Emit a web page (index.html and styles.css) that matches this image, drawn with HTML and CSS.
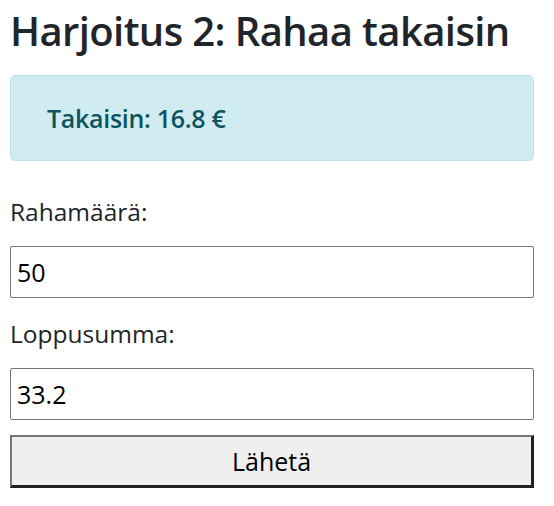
FILE: index.html
```html
<!DOCTYPE html>
<html lang="fi">
<head>
<meta charset="utf-8">
<link rel="stylesheet" href="styles.css">
</head>
<body>
<main class="page">
  <h1 class="title">Harjoitus 2: Rahaa takaisin</h1>
  <div class="alert"><h4 class="alert-text">Takaisin: 16.8 €</h4></div>
  <form class="form">
    <label class="label" for="raha">Rahamäärä:</label>
    <input class="field" id="raha" type="text" value="50">
    <label class="label" for="loppu">Loppusumma:</label>
    <input class="field field-last" id="loppu" type="text" value="33.2">
    <button class="submit" type="button">Lähetä</button>
  </form>
</main>
</body>
</html>
```
FILE: styles.css
```css
html, body { margin: 0; padding: 0; background: #fff; }
body { font-family: "Open Sans", "Noto Sans", sans-serif; color: #212529; }
.page { padding: 0 20px 0 10px; }
.title { margin: 0; padding-top: 7px; font-size: 40px; font-weight: 600; line-height: 48px; height: 68px; letter-spacing: -0.6px; }
.alert { box-sizing: border-box; height: 86px; background: #d1ecf1; border: 1px solid #bee5eb; border-radius: 5px; color: #0c5460; display: flex; align-items: center; padding: 0 36px; }
.alert-text { margin: 0; font-size: 25px; font-weight: 600; letter-spacing: -0.3px; }
.form { display: flex; flex-direction: column; padding-top: 36px; }
.label { font-size: 24.5px; line-height: 30px; height: 30px; margin-bottom: 19px; }
.field { box-sizing: border-box; height: 52px; margin: 0 0 21px; border: 1px solid #767676; border-radius: 2px; padding: 0 6px; font-family: inherit; font-size: 25px; color: #000; }
.field-last { margin-bottom: 15px; }
.submit { box-sizing: border-box; height: 53px; background: #efefef; border: 2px solid; border-color: #767676 #222 #222 #767676; border-width: 2px 3px 3px 2px; font-family: inherit; font-size: 25px; color: #000; padding: 0; }
```
